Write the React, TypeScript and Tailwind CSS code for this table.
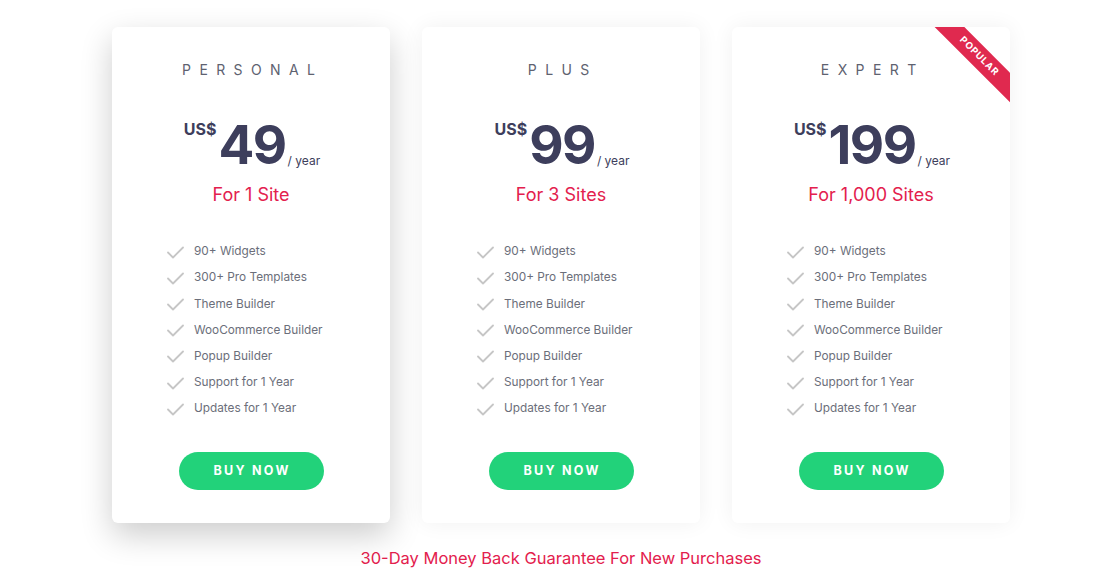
import React from "react";

interface Plan {
  name: string;
  price: string;
  sites: string;
  popular?: boolean;
  raised?: boolean;
}

const plans: Plan[] = [
  { name: "PERSONAL", price: "49", sites: "For 1 Site", raised: true },
  { name: "PLUS", price: "99", sites: "For 3 Sites" },
  { name: "EXPERT", price: "199", sites: "For 1,000 Sites", popular: true },
];

const features = [
  "90+ Widgets",
  "300+ Pro Templates",
  "Theme Builder",
  "WooCommerce Builder",
  "Popup Builder",
  "Support for 1 Year",
  "Updates for 1 Year",
];

const Check = () => (
  <svg width="17" height="13" viewBox="0 0 17 13" fill="none" className="shrink-0">
    <path d="M1 6.5 L6 11.5 L16 1.5" stroke="#c6c6c6" strokeWidth="1.8" strokeLinecap="round" strokeLinejoin="round" />
  </svg>
);

const PlanCard = ({ plan }: { plan: Plan }) => (
  <div
    className={
      "relative overflow-hidden w-[278px] h-[496px] bg-white rounded-[6px] flex flex-col items-center " +
      (plan.raised
        ? "shadow-[0_12px_32px_rgba(0,0,0,0.2)]"
        : "shadow-[0_0_22px_rgba(0,0,0,0.06)]")
    }
  >
    {plan.popular && (
      <div className="absolute left-[187px] top-[19px] w-[120px] h-[21px] rotate-45 bg-[#e0294f] flex items-center justify-center">
        <span className="text-white text-[9.5px] font-bold tracking-[0.08em]">POPULAR</span>
      </div>
    )}
    <div className="mt-[35px] text-[14px] leading-[16px] tracking-[0.6em] pl-[0.25em] text-[#5e6270]">
      {plan.name}
    </div>
    <div className="mt-[36px] flex items-start text-[#3d3e5c] pl-[2px]">
      <span className="mt-[5px] text-[16px] font-bold leading-[20px] mr-[2px]">US$</span>
      <span className="text-[53px] font-bold leading-[62px] tracking-[-0.03em]">{plan.price}</span>
      <span className="self-end mb-[8px] ml-[2px] text-[12px] leading-[14px] text-[#3d3e5c]">/ year</span>
    </div>
    <div className="mt-[7px] text-[18px] leading-[24px] text-[#e3204d]">{plan.sites}</div>
    <ul className="mt-[32px] self-start ml-[55px] flex flex-col">
      {features.map((f) => (
        <li key={f} className="h-[26.2px] flex items-center gap-[10px] text-[11.8px] text-[#6b6e7a]">
          <Check />
          <span>{f}</span>
        </li>
      ))}
    </ul>
    <button className="mt-[30px] w-[145px] h-[38px] rounded-full bg-[#22d27a] text-white text-[12.5px] font-bold tracking-[0.18em] pl-[0.18em]">
      BUY NOW
    </button>
  </div>
);

export default function App() {
  return (
    <div
      className="w-[1100px] h-[575px] bg-white overflow-hidden"
      style={{ fontFamily: "Inter, 'Liberation Sans', sans-serif" }}
    >
      <div className="pt-[27px] pl-[112px] flex gap-[32px]">
        {plans.map((p) => (
          <PlanCard key={p.name} plan={p} />
        ))}
      </div>
      <div className="mt-[23px] w-[898px] ml-[112px] text-center text-[16.5px] leading-[24px] text-[#e3204d]">
        30-Day Money Back Guarantee For New Purchases
      </div>
    </div>
  );
}
